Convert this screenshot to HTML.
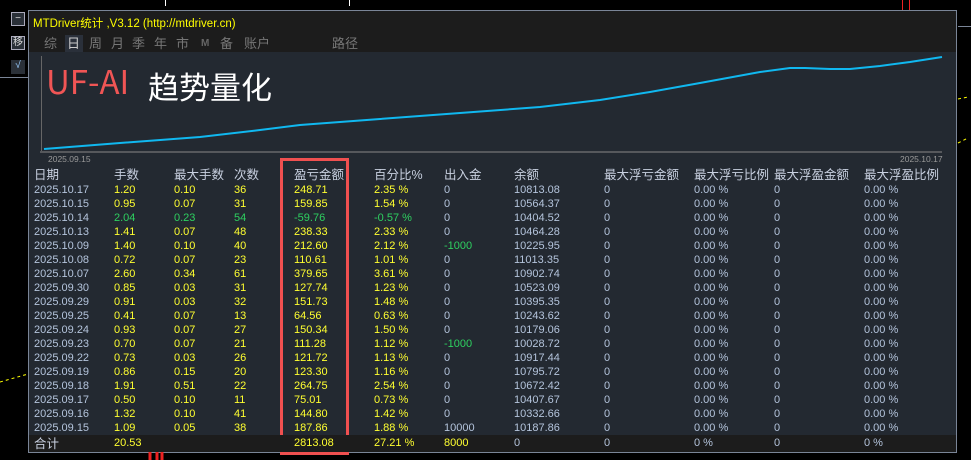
<!DOCTYPE html>
<html><head><meta charset="utf-8"><style>
body{margin:0;width:971px;height:460px;background:#000;overflow:hidden;position:relative;font-family:"Liberation Sans","Noto Sans CJK SC",sans-serif}
.p{position:absolute}
#panel{left:28px;top:10px;width:929px;height:443px;background:#232931;border:1px solid #7a8597;box-sizing:border-box}
#title{left:29px;top:11px;width:927px;height:41px;background:#1c1c1c}
.t{position:absolute;font-size:11px;white-space:nowrap}
.r{position:absolute;left:0;width:971px;height:14px;font-size:11px;line-height:14px}
.r span{position:absolute;top:0;line-height:14px;white-space:nowrap}
.btn{position:absolute;left:11px;width:14px;height:14px;border:1px solid #aab;box-sizing:border-box;background:#2a3038;color:#ddd;font-size:10px;text-align:center;line-height:12px}
.tab{position:absolute;top:35px;color:#777;font-size:13px;line-height:17px}
</style></head><body>
<div class="p" style="left:0;top:77px;width:28px;height:1px;background:#7a8597"></div>
<div class="p" style="left:958px;top:26px;width:13px;height:1px;background:#7a8597"></div>
<div class="btn" style="top:12px">−</div>
<div class="btn" style="top:36px">移</div>
<div class="btn" style="top:60px;border:none;background:#2a3038;color:#9cf">√</div>
<div class="p" style="left:165px;top:0;width:1px;height:6px;background:#fff"></div>
<div class="p" style="left:349px;top:0;width:1px;height:6px;background:#fff"></div>
<div class="p" style="left:902px;top:0;width:1px;height:10px;background:#e22"></div>
<div class="p" style="left:909px;top:0;width:1px;height:10px;background:#e22"></div>
<div id="panel" class="p"></div>
<div id="title" class="p"></div>
<div class="t" style="left:33px;top:15px;color:#ff0;font-size:11.5px">MTDriver统计 ,V3.12 (http://mtdriver.cn)</div>
<div class="p" style="left:65px;top:35px;width:18px;height:17px;background:#2a303a"></div>
<div class="tab" style="left:44px">综</div>
<div class="tab" style="left:67px;color:#ccc">日</div>
<div class="tab" style="left:89px">周</div>
<div class="tab" style="left:111px">月</div>
<div class="tab" style="left:132px">季</div>
<div class="tab" style="left:154px">年</div>
<div class="tab" style="left:176px">市</div>
<div class="tab" style="left:201px;font-size:10px;font-weight:bold;color:#666">M</div>
<div class="tab" style="left:220px">备</div>
<div class="tab" style="left:244px">账户</div>
<div class="tab" style="left:332px">路径</div>
<div class="p" style="left:41px;top:56px;width:1px;height:95px;background:#666"></div>
<div class="t" style="left:46px;top:57px;font-size:33px;line-height:46px;color:#f05555;font-family:'Noto Sans CJK SC',sans-serif">UF-AI</div>
<div class="t" style="left:148px;top:63px;font-size:31px;color:#fff">趋势量化</div>
<svg class="p" style="left:0;top:0" width="971" height="460"><polyline fill="none" stroke="#10b8f0" stroke-width="2" points="44,149 120,143 200,137 260,130 300,125 380,119 460,113 540,107 600,100 650,92 700,83 760,72 790,68 805,68 830,69 850,69 880,66 910,62 942,57"/>
<line x1="40" y1="152" x2="942" y2="152" stroke="#888"/>
<rect x="281.5" y="159.5" width="66" height="294" fill="none" stroke="#f05050" stroke-width="3"/>
<path d="M150 450v10M157 448v12M162 450v10" stroke="#e22" stroke-width="3"/>
<path d="M0 382l28-8M205 450l30-14M958 99l10-2M958 143l10-5" stroke="#ff0" stroke-dasharray="3 3"/></svg>
<div class="t" style="left:48px;top:154px;color:#999;font-size:8.5px">2025.09.15</div>
<div class="t" style="left:900px;top:154px;color:#999;font-size:8.5px">2025.10.17</div>
<div class="p" style="left:29px;top:435px;width:927px;height:17px;background:#1c1c1c"></div>
<div id="rows"></div>
<script>
var X=[34,114,174,234,294,374,444,514,604,694,774,864];
var H=["日期","手数","最大手数","次数","盈亏金额","百分比%","出入金","余额","最大浮亏金额","最大浮亏比例","最大浮盈金额","最大浮盈比例"];
var D=[["2025.10.17","1.20","0.10","36","248.71","2.35 %","0","10813.08"],
["2025.10.15","0.95","0.07","31","159.85","1.54 %","0","10564.37"],
["2025.10.14","2.04","0.23","54","-59.76","-0.57 %","0","10404.52"],
["2025.10.13","1.41","0.07","48","238.33","2.33 %","0","10464.28"],
["2025.10.09","1.40","0.10","40","212.60","2.12 %","-1000","10225.95"],
["2025.10.08","0.72","0.07","23","110.61","1.01 %","0","11013.35"],
["2025.10.07","2.60","0.34","61","379.65","3.61 %","0","10902.74"],
["2025.09.30","0.85","0.03","31","127.74","1.23 %","0","10523.09"],
["2025.09.29","0.91","0.03","32","151.73","1.48 %","0","10395.35"],
["2025.09.25","0.41","0.07","13","64.56","0.63 %","0","10243.62"],
["2025.09.24","0.93","0.07","27","150.34","1.50 %","0","10179.06"],
["2025.09.23","0.70","0.07","21","111.28","1.12 %","-1000","10028.72"],
["2025.09.22","0.73","0.03","26","121.72","1.13 %","0","10917.44"],
["2025.09.19","0.86","0.15","20","123.30","1.16 %","0","10795.72"],
["2025.09.18","1.91","0.51","22","264.75","2.54 %","0","10672.42"],
["2025.09.17","0.50","0.10","11","75.01","0.73 %","0","10407.67"],
["2025.09.16","1.32","0.10","41","144.80","1.42 %","0","10332.66"],
["2025.09.15","1.09","0.05","38","187.86","1.88 %","10000","10187.86"]];
var h='<div class="r" style="top:168px;font-size:12.5px">';
H.forEach(function(s,i){h+='<span style="left:'+X[i]+'px;color:#c8d0e0">'+s+'</span>'});h+='</div>';
D.forEach(function(r,k){var neg=r[4][0]=='-';h+='<div class="r" style="top:'+(183+k*14)+'px">';
r.concat(["0","0.00 %","0","0.00 %"]).forEach(function(s,i){var c=i==0||i>=7?'#b4c4dc':(i==6?(s[0]=='-'?'#2ed060':'#b4c4dc'):(neg?'#2ed060':'#ffff30'));h+='<span style="left:'+X[i]+'px;color:'+c+'">'+s+'</span>'});h+='</div>'});
h+='<div class="r" style="top:436px"><span style="left:34px;color:#c8d0e0;font-size:12.5px;top:1px">合计</span>';
[[1,"20.53"],[4,"2813.08"],[5,"27.21 %"],[6,"8000"]].forEach(function(a){h+='<span style="left:'+X[a[0]]+'px;color:#ffff30">'+a[1]+'</span>'});
[[7,"0"],[8,"0"],[9,"0 %"],[10,"0"],[11,"0 %"]].forEach(function(a){h+='<span style="left:'+X[a[0]]+'px;color:#b4c4dc">'+a[1]+'</span>'});
h+='</div>';document.getElementById('rows').innerHTML=h;
</script>
</body></html>
